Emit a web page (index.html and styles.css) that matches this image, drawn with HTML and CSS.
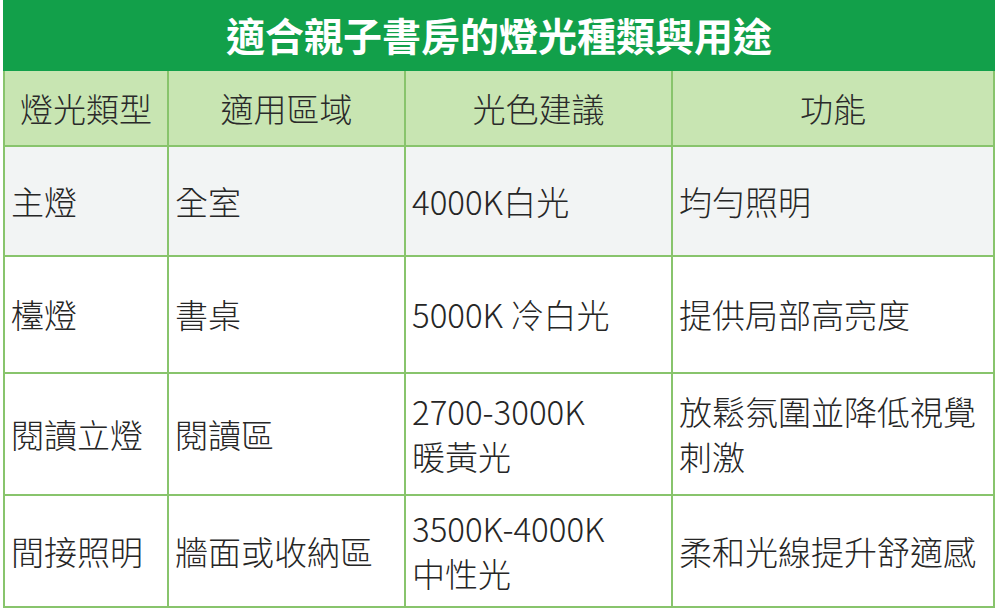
FILE: index.html
```html
<!DOCTYPE html>
<html lang="zh-Hant">
<head>
<meta charset="utf-8">
<link rel="stylesheet" href="styles.css">
</head>
<body>
<table class="lamp-table">
  <colgroup>
    <col class="c1"><col class="c2"><col class="c3"><col class="c4">
  </colgroup>
  <thead>
    <tr class="title-row"><th colspan="4">適合親子書房的燈光種類與用途</th></tr>
    <tr class="head-row"><th>燈光類型</th><th>適用區域</th><th>光色建議</th><th>功能</th></tr>
  </thead>
  <tbody>
    <tr class="r1 shade"><td>主燈</td><td>全室</td><td>4000K白光</td><td>均勻照明</td></tr>
    <tr class="r2"><td>檯燈</td><td>書桌</td><td>5000K 冷白光</td><td>提供局部高亮度</td></tr>
    <tr class="r3"><td>閱讀立燈</td><td>閱讀區</td><td>2700-3000K<br>暖黃光</td><td>放鬆氛圍並降低視覺<br>刺激</td></tr>
    <tr class="r4"><td>間接照明</td><td>牆面或收納區</td><td>3500K-4000K<br>中性光</td><td>柔和光線提升舒適感</td></tr>
  </tbody>
</table>
</body>
</html>
```
FILE: styles.css
```css
html, body {
  margin: 0;
  padding: 0;
  background: #ffffff;
}
body {
  padding: 0 0 0 3px;
  font-family: "Noto Sans CJK TC", "Noto Sans", sans-serif;
  color: #262626;
}
.lamp-table {
  border-collapse: collapse;
  table-layout: fixed;
  width: 990px;
}
.c1 { width: 164px; }
.c2 { width: 237px; }
.c3 { width: 267px; }
.c4 { width: 322px; }
.lamp-table th,
.lamp-table td {
  border: 2px solid #88c46c;
  padding: 0 0 0 6px;
  vertical-align: middle;
  font-size: 33px;
  font-weight: 300;
  line-height: 45px;
  white-space: nowrap;
}
.title-row th {
  background: #12a04a;
  color: #ffffff;
  font-size: 39px;
  font-weight: 700;
  height: 69px;
  text-align: center;
  padding: 0;
  border-color: #12a04a;
  border-top: none;
}
.head-row th {
  background: #c8e5b2;
  height: 74px;
  text-align: center;
  padding: 0;
  color: #2a2a2a;
}
.shade td { background: #f2f4f4; }
.r1 td { height: 108px; }
.r2 td { height: 115px; }
.r3 td { height: 120px; }
.r4 td { height: 110px; }
.lamp-table td { text-align: left; }
```
